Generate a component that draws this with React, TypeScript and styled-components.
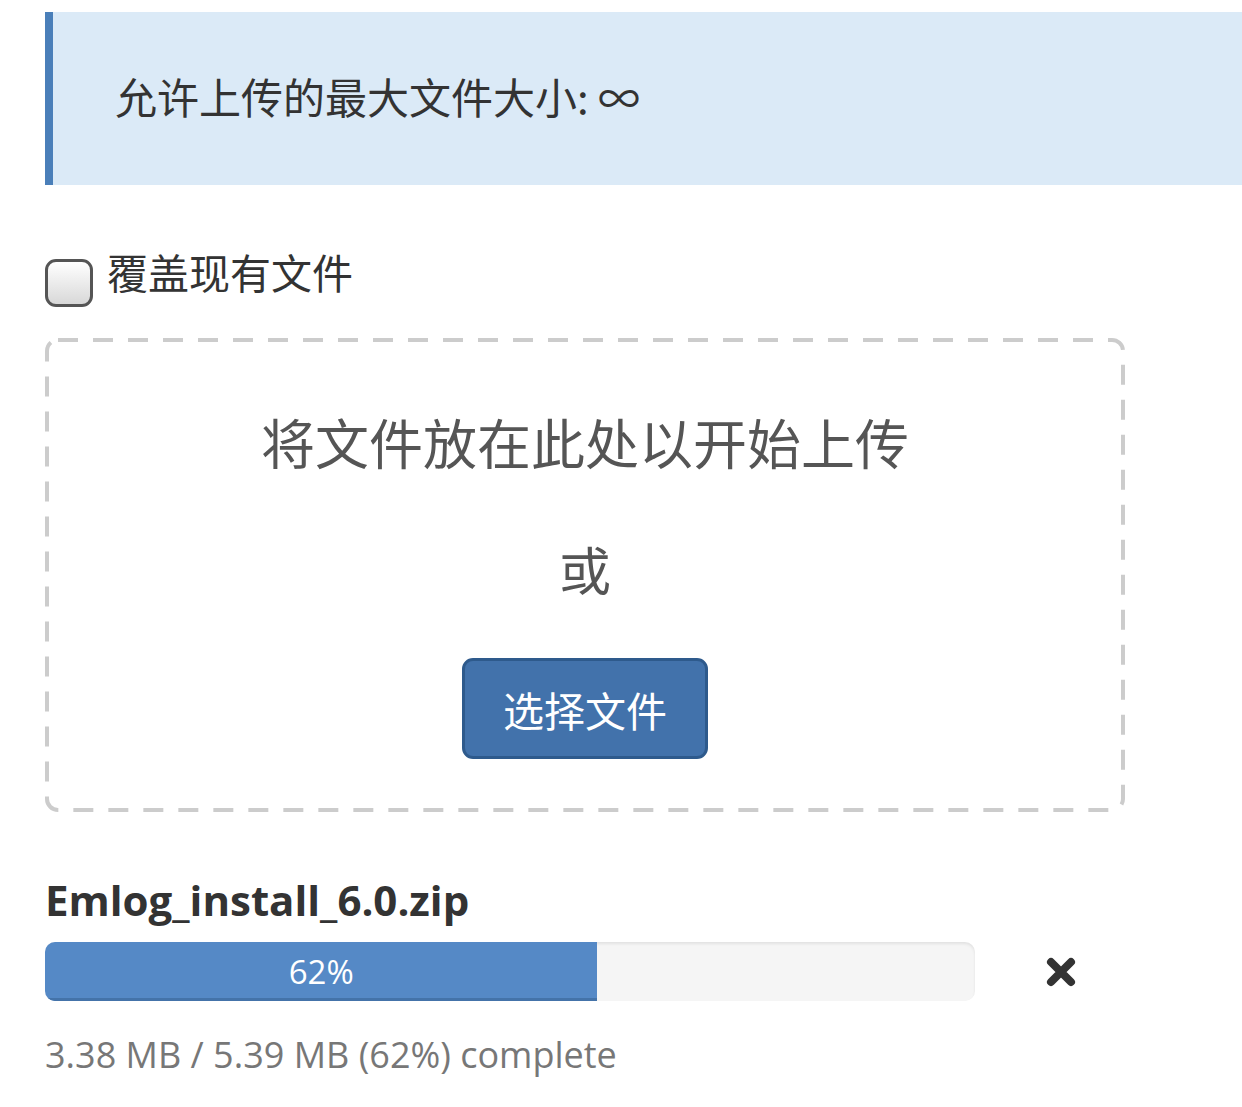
import React from "react";
import styled, { createGlobalStyle } from "styled-components";

const GlobalStyle = createGlobalStyle`
  html, body {
    margin: 0;
    padding: 0;
    background: #ffffff;
  }
  body {
    font-family: "Open Sans", "Noto Sans CJK SC", sans-serif;
    color: #333333;
  }
`;

const file = {
  name: "Emlog_install_6.0.zip",
  loaded: 3.38,
  total: 5.39,
  percent: 62,
};

const App = () => {
  return (
    <>
      <GlobalStyle />
      <Page>
        <Notice>允许上传的最大文件大小: ∞</Notice>

        <CheckRow>
          <Check type="checkbox" />
          <CheckLabel>覆盖现有文件</CheckLabel>
        </CheckRow>

        <DropZone>
          <DashFrame aria-hidden="true">
            <rect
              x="2"
              y="2"
              width="calc(100% - 4px)"
              height="calc(100% - 4px)"
              rx="11"
              fill="none"
              stroke="#cccccc"
              strokeWidth="4"
              strokeDasharray="20 15"
            />
          </DashFrame>
          <DropTitle>将文件放在此处以开始上传</DropTitle>
          <DropOr>或</DropOr>
          <PickButton type="button">选择文件</PickButton>
        </DropZone>

        <FileItem>
          <FileName>{file.name}</FileName>
          <ProgressRow>
            <Bar>
              <Fill style={{ width: `${file.percent * 0.958}%` }}>
                {file.percent}%
              </Fill>
            </Bar>
            <Cancel aria-label="cancel">
              <svg width="30" height="30" viewBox="0 0 30 30">
                <path
                  d="M5 5 L25 25 M25 5 L5 25"
                  stroke="#333"
                  strokeWidth="8"
                  strokeLinecap="round"
                />
              </svg>
            </Cancel>
          </ProgressRow>
          <Status>
            {file.loaded} MB / {file.total} MB ({file.percent}%) complete
          </Status>
        </FileItem>
      </Page>
    </>
  );
};

export default App;

const Page = styled.div`
  padding: 12px 0 0 45px;
  overflow: hidden;
`;

const Notice = styled.div`
  height: 173px;
  box-sizing: border-box;
  display: flex;
  align-items: center;
  background-color: #dbeaf7;
  border-left: 8px solid #4a7fb9;
  padding: 0 0 6px 62px;
  font-family: "Noto Sans CJK SC", "Open Sans", sans-serif;
  font-size: 42px;
  color: #333;
`;

const CheckRow = styled.label`
  display: flex;
  align-items: center;
  margin-top: 67px;
  height: 48px;
`;

const Check = styled.input`
  appearance: none;
  margin: 0 14px 0 0;
  width: 48px;
  height: 48px;
  box-sizing: border-box;
  border: 3px solid #555;
  border-radius: 11px;
  background: linear-gradient(#ffffff, #d8d8d8);
  position: relative;
  top: 7px;
`;

const CheckLabel = styled.span`
  font-family: "Noto Sans CJK SC", sans-serif;
  font-size: 41px;
  color: #333;
  position: relative;
  top: -5px;
`;

const DropZone = styled.div`
  position: relative;
  margin-top: 38px;
  width: 1080px;
  height: 474px;
  box-sizing: border-box;
  display: flex;
  flex-direction: column;
  align-items: center;
  padding-top: 69px;
`;

const DashFrame = styled.svg`
  position: absolute;
  inset: 0;
  width: 100%;
  height: 100%;
  pointer-events: none;
`;

const DropTitle = styled.div`
  font-family: "Noto Sans CJK SC", sans-serif;
  font-size: 54px;
  line-height: 70px;
  color: #555;
`;

const DropOr = styled.div`
  font-family: "Noto Sans CJK SC", sans-serif;
  font-size: 52px;
  line-height: 70px;
  margin-top: 57px;
  color: #555;
`;

const PickButton = styled.button`
  margin-top: 54px;
  width: 246px;
  height: 101px;
  box-sizing: border-box;
  background-color: #4272ab;
  border: 3px solid #2e5a8c;
  border-radius: 11px;
  color: #ffffff;
  font-family: "Noto Sans CJK SC", sans-serif;
  font-size: 41px;
  padding: 0;
`;

const FileItem = styled.div`
  margin-top: 58px;
`;

const FileName = styled.div`
  font-family: "Open Sans", sans-serif;
  font-weight: 700;
  font-size: 42px;
  line-height: 60px;
  color: #333;
`;

const ProgressRow = styled.div`
  display: flex;
  align-items: center;
  margin-top: 12px;
`;

const Bar = styled.div`
  width: 930px;
  height: 59px;
  background-color: #f5f5f5;
  border-radius: 10px;
  box-shadow: inset 0 2px 3px rgba(0, 0, 0, 0.08);
  overflow: hidden;
  display: flex;
`;

const Fill = styled.div`
  height: 100%;
  box-sizing: border-box;
  background-color: #5589c6;
  border-bottom: 3px solid #4473a9;
  color: #ffffff;
  font-family: "Open Sans", sans-serif;
  font-size: 33px;
  display: flex;
  align-items: center;
  justify-content: center;
  padding-top: 2px;
`;

const Cancel = styled.span`
  margin-left: 71px;
  display: flex;
  align-items: center;
`;

const Status = styled.div`
  margin-top: 31px;
  font-family: "Open Sans", sans-serif;
  font-size: 36px;
  line-height: 46px;
  color: #777;
`;
